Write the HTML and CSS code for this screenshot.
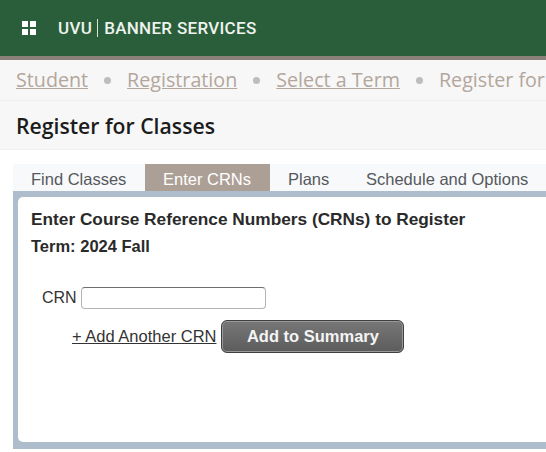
FILE: index.html
```html
<!DOCTYPE html>
<html lang="en">
<head>
  <meta charset="UTF-8">
  <title>Register for Classes</title>
  <link rel="stylesheet" href="styles.css">
</head>
<body>
  <header class="topBar">
    <svg class="gridIcon" width="16" height="16" viewBox="0 0 16 16" fill="#fff">
      <rect x="1" y="1" width="6" height="6"></rect>
      <rect x="9" y="1" width="6" height="6"></rect>
      <rect x="1" y="9" width="6" height="6"></rect>
      <rect x="9" y="9" width="6" height="6"></rect>
    </svg>
    <span class="brand">UVU</span>
    <span class="brandSep"></span>
    <span class="brand">BANNER SERVICES</span>
  </header>

  <nav class="breadcrumb">
    <a href="#">Student</a>
    <span class="dot"></span>
    <a href="#">Registration</a>
    <span class="dot"></span>
    <a href="#">Select a Term</a>
    <span class="dot"></span>
    <span class="current">Register for</span>
  </nav>

  <h1 class="pageTitle">Register for Classes</h1>

  <main class="content">
    <div class="tabs">
      <div class="tab tabFind">Find Classes</div>
      <div class="tab tabActive">Enter CRNs</div>
      <div class="tab tabPlans">Plans</div>
      <div class="tab tabSchedule">Schedule and Options</div>
    </div>
    <section class="panel">
      <div class="panelBody">
        <h2 class="panelTitle">Enter Course Reference Numbers (CRNs) to Register</h2>
        <div class="term">Term: 2024 Fall</div>
        <div class="crnRow">
          <label for="crn">CRN</label>
          <input type="text" id="crn">
        </div>
        <div class="actions">
          <a href="#" class="addLink">+ Add Another CRN</a>
          <button class="btnSummary">Add to Summary</button>
        </div>
      </div>
    </section>
  </main>
</body>
</html>
```

FILE: styles.css
```css
html,
body {
  margin: 0;
  padding: 0;
  height: 100%;
  overflow: hidden;
}

body {
  background-color: #fff;
  font-family: "Liberation Sans", Arial, sans-serif;
}

.topBar {
  display: flex;
  align-items: center;
  box-sizing: border-box;
  height: 60px;
  padding: 0 0 0 21px;
  background-color: #2a5e3a;
  border-bottom: 4px solid #8c8178;
  color: #fff;
}

.gridIcon {
  margin-right: 21px;
}

.brand {
  font-family: Roboto, sans-serif;
  font-size: 17px;
  font-weight: 500;
  letter-spacing: 0.3px;
  color: #eef3ef;
}

.brandSep {
  width: 1px;
  height: 18px;
  margin: 0 6px 0 5px;
  background-color: #d8e2da;
}

.breadcrumb {
  display: flex;
  align-items: center;
  box-sizing: border-box;
  height: 41px;
  padding: 0 0 2px 16px;
  background-color: #f7f7f7;
  border-bottom: 1px solid #efefef;
  font-family: "Open Sans", sans-serif;
  font-size: 19.7px;
  color: #b3a69c;
  white-space: nowrap;
}

.breadcrumb a {
  color: #b3a69c;
}

.dot {
  flex: none;
  width: 7px;
  height: 7px;
  margin: 3px 16px 0;
  border-radius: 50%;
  background-color: #bdbdbd;
}

.pageTitle {
  box-sizing: border-box;
  height: 49px;
  margin: 0;
  padding: 11px 0 0 16px;
  background-color: #f7f7f7;
  border-bottom: 1px solid #efefef;
  font-family: "Open Sans", sans-serif;
  font-size: 21.2px;
  font-weight: 600;
  line-height: 27px;
  color: #1c1c1c;
}

.content {
  padding: 14px 0 0 13px;
}

.tabs {
  display: flex;
  height: 27px;
  background-color: #f8f9fb;
  font-size: 16.5px;
  color: #55585c;
}

.tab {
  box-sizing: border-box;
  line-height: 30px;
  white-space: nowrap;
}

.tabFind {
  width: 132px;
  padding-left: 18px;
}

.tabActive {
  width: 125px;
  padding-left: 18px;
  background-color: #ac9f96;
  color: #fff;
}

.tabPlans {
  width: 78px;
  padding-left: 18px;
}

.tabSchedule {
  padding-left: 18px;
}

.panel {
  box-sizing: border-box;
  height: 258px;
  padding: 6px 0 7px 5px;
  background-color: #aebdcb;
}

.panelBody {
  box-sizing: border-box;
  height: 100%;
  padding: 12px 0 0 13px;
  background-color: #fff;
  border-radius: 5px 0 0 5px;
}

.panelTitle {
  margin: 0;
  font-size: 17.25px;
  font-weight: 700;
  line-height: 20px;
  white-space: nowrap;
  color: #2a2a2a;
}

.term {
  margin-top: 8px;
  font-size: 16.5px;
  font-weight: 700;
  line-height: 18px;
  color: #2a2a2a;
}

.crnRow {
  display: flex;
  align-items: center;
  margin: 32px 0 0 11px;
  font-size: 16px;
  color: #333;
}

.crnRow label {
  margin-right: 4px;
}

.crnRow input {
  box-sizing: border-box;
  width: 185px;
  height: 22px;
  padding: 0 4px;
  background-color: #fff;
  border: 1px solid #b4b4b4;
  border-top-color: #6e6e6e;
  border-radius: 4px;
}

.actions {
  display: flex;
  align-items: center;
  margin: 11px 0 0 41px;
}

.addLink {
  margin-right: 5px;
  font-size: 16.5px;
  color: #333;
}

.btnSummary {
  box-sizing: border-box;
  width: 183px;
  height: 33px;
  padding: 0;
  background: linear-gradient(#777, #5c5c5c);
  border: 1px solid #3f3f3f;
  border-radius: 6px;
  box-shadow: inset 0 0 0 1px #9a9a9a;
  font-family: "Liberation Sans", Arial, sans-serif;
  font-size: 16.5px;
  font-weight: 700;
  color: #f4f4f4;
}
```
